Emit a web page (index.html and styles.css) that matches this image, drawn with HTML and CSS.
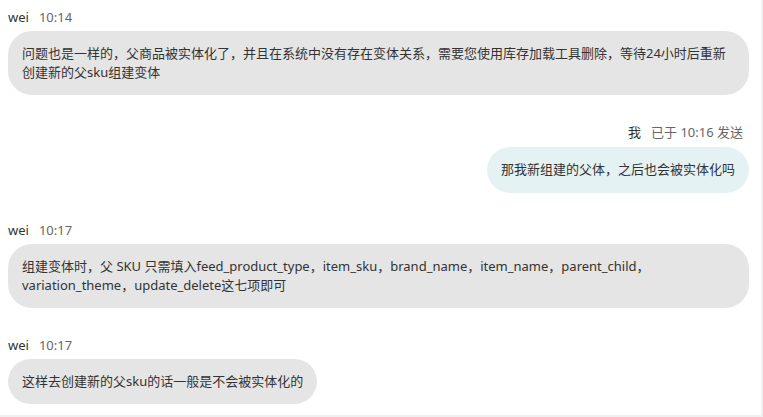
FILE: index.html
```html
<!DOCTYPE html>
<html lang="zh-CN">
<head>
<meta charset="utf-8">
<link rel="stylesheet" href="styles.css">
</head>
<body>
<div class="chat">
  <div class="msg left">
    <div class="meta"><span class="name">wei</span><span class="time">10:14</span></div>
    <div class="bubble">问题也是一样的，父商品被实体化了，并且在系统中没有存在变体关系，需要您使用库存加载工具删除，等待24小时后重新创建新的父sku组建变体</div>
  </div>
  <div class="msg right">
    <div class="meta"><span class="name">我</span><span class="time">已于 10:16 发送</span></div>
    <div class="bubble mine">那我新组建的父体，之后也会被实体化吗</div>
  </div>
  <div class="msg left">
    <div class="meta"><span class="name">wei</span><span class="time">10:17</span></div>
    <div class="bubble">组建变体时，父 SKU 只需填入feed_product_type，item_sku，brand_name，item_name，parent_child，variation_theme，update_delete这七项即可</div>
  </div>
  <div class="msg left">
    <div class="meta"><span class="name">wei</span><span class="time">10:17</span></div>
    <div class="bubble">这样去创建新的父sku的话一般是不会被实体化的</div>
  </div>
</div>
</body>
</html>
```

FILE: styles.css
```css
html, body {
  margin: 0;
  padding: 0;
  background: #f0f0f0;
}
.chat {
  width: 761px;
  height: 415px;
  box-sizing: border-box;
  background: #ffffff;
  padding: 8px 12px 0 8px;
  overflow: hidden;
  font-family: "Noto Sans", "Noto Sans CJK SC", sans-serif;
  font-size: 13px;
  color: #333333;
  display: flex;
  flex-direction: column;
  gap: 28px;
}
.msg {
  display: flex;
  flex-direction: column;
}
.msg.left {
  align-items: flex-start;
}
.msg.right {
  align-items: flex-end;
  padding-right: 6px;
}
.meta {
  display: flex;
  gap: 10px;
  line-height: 18px;
  height: 18px;
  margin-bottom: 5px;
}
.name {
  color: #333333;
}
.time {
  color: #666666;
}
.right .meta {
  margin-bottom: 6px;
}
.bubble {
  background: #e5e5e5;
  border-radius: 24px;
  padding: 13px 14px;
  line-height: 19px;
  box-sizing: border-box;
  max-width: 100%;
}
.right .bubble {
  margin-right: -6px;
  padding: 13px 14px 14px;
}
.bubble.mine {
  background: #e5f2f4;
}
```
